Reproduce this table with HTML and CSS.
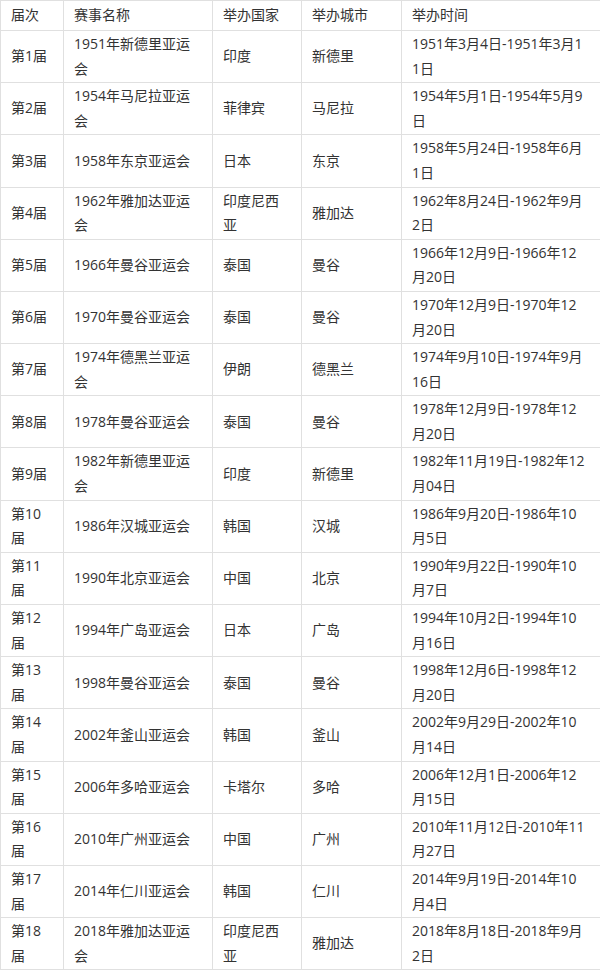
FILE: index.html
```html
<!DOCTYPE html>
<html lang="zh-CN">
<head>
<meta charset="utf-8">
<title>亚运会历届</title>
<link rel="stylesheet" href="styles.css">
</head>
<body>
<div class="wrap">
<table class="games">
<colgroup>
<col class="c1"><col class="c2"><col class="c3"><col class="c4"><col class="c5">
</colgroup>
<thead>
<tr><th>届次</th><th>赛事名称</th><th>举办国家</th><th>举办城市</th><th>举办时间</th></tr>
</thead>
<tbody>
<tr><td>第1届</td><td>1951年新德里亚运会</td><td>印度</td><td>新德里</td><td>1951年3月4日-1951年3月11日</td></tr>
<tr><td>第2届</td><td>1954年马尼拉亚运会</td><td>菲律宾</td><td>马尼拉</td><td>1954年5月1日-1954年5月9日</td></tr>
<tr><td>第3届</td><td>1958年东京亚运会</td><td>日本</td><td>东京</td><td>1958年5月24日-1958年6月1日</td></tr>
<tr><td>第4届</td><td>1962年雅加达亚运会</td><td>印度尼西亚</td><td>雅加达</td><td>1962年8月24日-1962年9月2日</td></tr>
<tr><td>第5届</td><td>1966年曼谷亚运会</td><td>泰国</td><td>曼谷</td><td>1966年12月9日-1966年12月20日</td></tr>
<tr><td>第6届</td><td>1970年曼谷亚运会</td><td>泰国</td><td>曼谷</td><td>1970年12月9日-1970年12月20日</td></tr>
<tr><td>第7届</td><td>1974年德黑兰亚运会</td><td>伊朗</td><td>德黑兰</td><td>1974年9月10日-1974年9月16日</td></tr>
<tr><td>第8届</td><td>1978年曼谷亚运会</td><td>泰国</td><td>曼谷</td><td>1978年12月9日-1978年12月20日</td></tr>
<tr><td>第9届</td><td>1982年新德里亚运会</td><td>印度</td><td>新德里</td><td>1982年11月19日-1982年12月04日</td></tr>
<tr><td>第10届</td><td>1986年汉城亚运会</td><td>韩国</td><td>汉城</td><td>1986年9月20日-1986年10月5日</td></tr>
<tr><td>第11届</td><td>1990年北京亚运会</td><td>中国</td><td>北京</td><td>1990年9月22日-1990年10月7日</td></tr>
<tr><td>第12届</td><td>1994年广岛亚运会</td><td>日本</td><td>广岛</td><td>1994年10月2日-1994年10月16日</td></tr>
<tr><td>第13届</td><td>1998年曼谷亚运会</td><td>泰国</td><td>曼谷</td><td>1998年12月6日-1998年12月20日</td></tr>
<tr><td>第14届</td><td>2002年釜山亚运会</td><td>韩国</td><td>釜山</td><td>2002年9月29日-2002年10月14日</td></tr>
<tr><td>第15届</td><td>2006年多哈亚运会</td><td>卡塔尔</td><td>多哈</td><td>2006年12月1日-2006年12月15日</td></tr>
<tr><td>第16届</td><td>2010年广州亚运会</td><td>中国</td><td>广州</td><td>2010年11月12日-2010年11月27日</td></tr>
<tr><td>第17届</td><td>2014年仁川亚运会</td><td>韩国</td><td>仁川</td><td>2014年9月19日-2014年10月4日</td></tr>
<tr><td>第18届</td><td>2018年雅加达亚运会</td><td>印度尼西亚</td><td>雅加达</td><td>2018年8月18日-2018年9月2日</td></tr>
</tbody>
</table>
</div>
</body>
</html>
```
FILE: styles.css
```css
html, body {
  margin: 0;
  padding: 0;
  background: #fff;
}
.wrap {
  width: 600px;
  overflow: hidden;
}
.games {
  border-collapse: collapse;
  table-layout: fixed;
  width: 601px;
  font-family: "Open Sans", "Noto Sans CJK SC", sans-serif;
  font-size: 14px;
  color: #333;
  word-break: break-all;
}
.c1 { width: 63px; }
.c2 { width: 149px; }
.c3 { width: 89px; }
.c4 { width: 100px; }
.c5 { width: 200px; }
.games th,
.games td {
  border: 1px solid #e0e0e0;
  text-align: left;
  vertical-align: middle;
  font-weight: normal;
  padding: 1px 11px 1px 10px;
  line-height: 24.6px;
}
.games th {
  padding-top: 2.2px;
  padding-bottom: 2.2px;
}
```
